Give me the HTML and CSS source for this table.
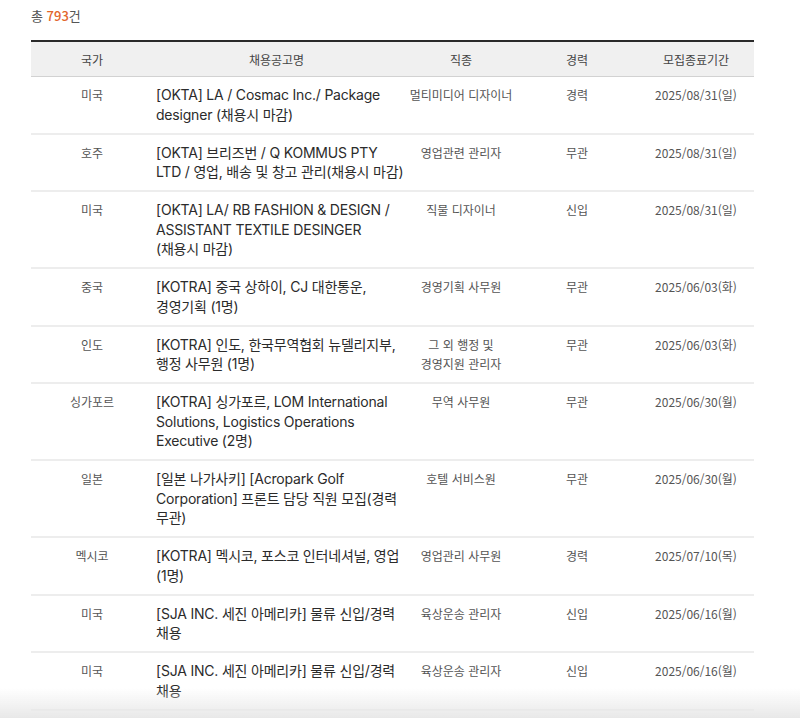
FILE: index.html
```html
<!DOCTYPE html>
<html lang="ko">
<head>
<meta charset="utf-8">
<title>채용공고</title>
<link rel="stylesheet" href="styles.css">
</head>
<body>
<div class="wrap">
  <p class="total">총 <strong>793</strong>건</p>
  <table class="list">
    <colgroup>
      <col class="c-country"><col class="c-title"><col class="c-job"><col class="c-career"><col class="c-date">
    </colgroup>
    <thead>
      <tr><th>국가</th><th>채용공고명</th><th>직종</th><th>경력</th><th class="date">모집종료기간</th></tr>
    </thead>
    <tbody>
      <tr><td>미국</td><td class="title">[OKTA] LA / Cosmac Inc./ Package<br>designer (채용시 마감)</td><td>멀티미디어 디자이너</td><td>경력</td><td class="date">2025/08/31(일)</td></tr>
      <tr><td>호주</td><td class="title">[OKTA] 브리즈번 / Q KOMMUS PTY<br>LTD / 영업, 배송 및 창고 관리(채용시 마감)</td><td>영업관련 관리자</td><td>무관</td><td class="date">2025/08/31(일)</td></tr>
      <tr><td>미국</td><td class="title">[OKTA] LA/ RB FASHION &amp; DESIGN /<br>ASSISTANT TEXTILE DESINGER<br>(채용시 마감)</td><td>직물 디자이너</td><td>신입</td><td class="date">2025/08/31(일)</td></tr>
      <tr><td>중국</td><td class="title">[KOTRA] 중국 상하이, CJ 대한통운,<br>경영기획 (1명)</td><td>경영기획 사무원</td><td>무관</td><td class="date">2025/06/03(화)</td></tr>
      <tr><td>인도</td><td class="title">[KOTRA] 인도, 한국무역협회 뉴델리지부,<br>행정 사무원 (1명)</td><td>그 외 행정 및<br>경영지원 관리자</td><td>무관</td><td class="date">2025/06/03(화)</td></tr>
      <tr><td>싱가포르</td><td class="title">[KOTRA] 싱가포르, LOM International<br>Solutions, Logistics Operations<br>Executive (2명)</td><td>무역 사무원</td><td>무관</td><td class="date">2025/06/30(월)</td></tr>
      <tr><td>일본</td><td class="title">[일본 나가사키] [Acropark Golf<br>Corporation] 프론트 담당 직원 모집(경력<br>무관)</td><td>호텔 서비스원</td><td>무관</td><td class="date">2025/06/30(월)</td></tr>
      <tr><td>멕시코</td><td class="title">[KOTRA] 멕시코, 포스코 인터네셔널, 영업<br>(1명)</td><td>영업관리 사무원</td><td>경력</td><td class="date">2025/07/10(목)</td></tr>
      <tr><td>미국</td><td class="title">[SJA INC. 세진 아메리카] 물류 신입/경력<br>채용</td><td>육상운송 관리자</td><td>신입</td><td class="date">2025/06/16(월)</td></tr>
      <tr><td>미국</td><td class="title">[SJA INC. 세진 아메리카] 물류 신입/경력<br>채용</td><td>육상운송 관리자</td><td>신입</td><td class="date">2025/06/16(월)</td></tr>
    </tbody>
  </table>
</div>
<div class="fade"></div>
</body>
</html>
```

FILE: styles.css
```css
html, body {
  margin: 0;
  padding: 0;
  background: #fff;
}
body {
  font-family: "Noto Sans CJK KR", "Noto Sans", sans-serif;
  color: #555;
}
.wrap {
  padding: 0 46px 0 31px;
}
.total {
  margin: 0;
  padding-top: 7px;
  height: 33px;
  font-size: 13px;
  line-height: 18px;
  color: #555;
}
.total strong {
  color: #e2662c;
  font-weight: 500;
}
.list {
  width: 723px;
  border-collapse: collapse;
  table-layout: fixed;
  border-top: 2px solid #2a2a2a;
}
.c-country { width: 122px; }
.c-title { width: 247px; }
.c-job { width: 122px; }
.c-career { width: 110px; }
.c-date { width: 122px; }
.list th {
  background: #f0f0f0;
  height: 34px;
  padding: 0;
  font-size: 12px;
  font-weight: 400;
  color: #444;
  text-align: center;
  border-bottom: 1px solid #d2d2d2;
}
.list td {
  vertical-align: top;
  text-align: center;
  padding: 8px 0 8.5px;
  font-size: 12px;
  line-height: 19.5px;
  color: #555;
  border-bottom: 2px solid #ededed;
}
.list td.title {
  text-align: left;
  padding-left: 3px;
  padding-right: 0;
  font-family: "Inter", "Noto Sans CJK KR", sans-serif;
  font-size: 14px;
  color: #2b2b2b;
  letter-spacing: -0.2px;
  white-space: nowrap;
}
.list .date {
  padding-left: 6px;
}
.fade {
  position: fixed;
  left: 0;
  right: 0;
  bottom: 0;
  height: 30px;
  background: linear-gradient(to bottom, rgba(232,232,232,0), rgba(232,232,232,1));
  pointer-events: none;
}
```
